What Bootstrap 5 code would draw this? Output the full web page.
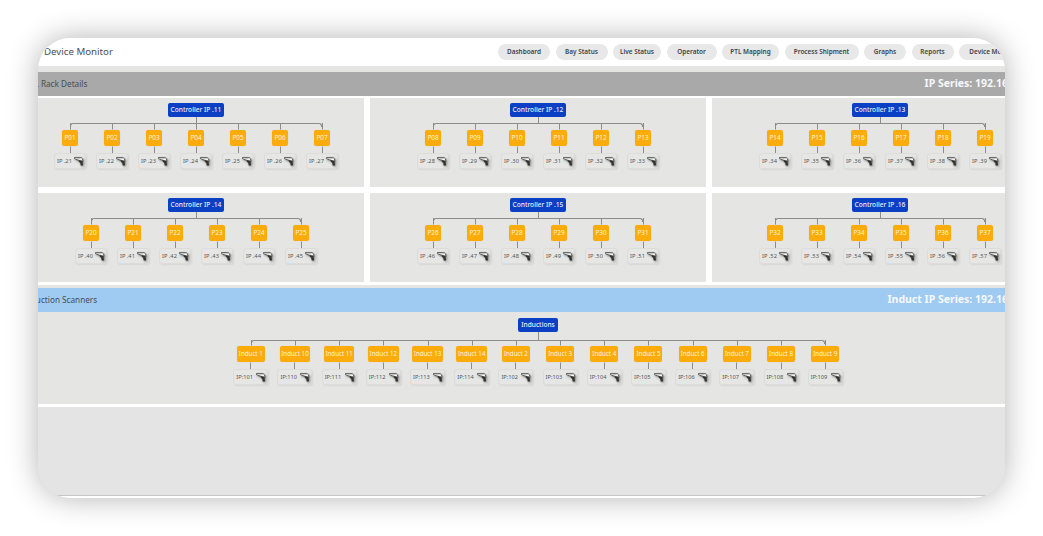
<!DOCTYPE html>
<html lang="en">
<head>
<meta charset="UTF-8" />
<meta name="viewport" content="width=device-width, initial-scale=1" />
<title>Device Monitor</title>
<link href="https://cdn.jsdelivr.net/npm/bootstrap@5.3.3/dist/css/bootstrap.min.css" rel="stylesheet" />
<style>
  html, body { height: 100%; background: #fff; overflow: hidden; }
  body { padding: 38px; font-family: "Noto Sans", "Open Sans", sans-serif; }
  .app-window { height: 460px; border-radius: 32px; overflow: hidden; background: #e5e5e4; box-shadow: 0 0 30px rgba(0,0,0,.3); }
  .app-head { height: 28px; background: #fff; padding-left: 6px; white-space: nowrap; margin-bottom: 6px; }
  .app-title { font-size: 9.7px; color: #4a5056; width: 454px; flex: none; }
  .menu-list { gap: 5.5px; }
  .menu-pill { font-size: 6.4px; font-weight: 600; color: #3c434a; background: #e8e8e8; height: 16px; line-height: 16px; border-radius: 8px; text-align: center; flex: none; }
  .sec-bar { height: 24px; overflow: hidden; }
  .sec-grey { background: #a9a9a9; }
  .sec-blue { background: #9fcbf3; }
  .sec-name { font-size: 8.2px; color: #474d54; white-space: nowrap; flex: none; }
  .rack-name { margin-left: -13px; }
  .induct-name { margin-left: -15px; }
  .sec-ip { font-size: 10.5px; font-weight: 700; color: #f6f8fa; white-space: nowrap; margin-right: -3px; }
  .rack-area { background: #fff; overflow: hidden; }
  .rack-grid { display: grid; grid-template-columns: repeat(3, 336px); gap: 6px; margin-left: -10px; padding-top: 2px; width: 1060px; }
  .rack-panel { height: 89px; background: #e5e5e3; padding-top: 5px; }
  .ctrl-tag { font-size: 6.6px; font-weight: 500; color: #e8eefc; background: #0b3fc4; height: 14px; line-height: 14px; padding: 0 3px; border-radius: 2px; white-space: nowrap; }
  .ctrl-stem { width: 1px; height: 6px; background: #8c8c8c; margin: 0 auto; }
  .tree-row { display: flex; justify-content: center; }
  .tree-item { width: 42px; position: relative; display: flex; flex-direction: column; align-items: center; padding-top: 7px; }
  .induct-row .tree-item { width: 44.2px; padding-top: 6px; }
  .tree-item::before { content: ""; position: absolute; top: 0; left: 0; right: 0; height: 0; border-top: 1px solid #8c8c8c; }
  .tree-item::after { content: ""; position: absolute; top: 0; left: 50%; width: 1px; height: 7px; background: #8c8c8c; }
  .tree-item:first-child::before { left: 50%; border-left: 1px solid #8c8c8c; border-top-left-radius: 3px; height: 4px; }
  .tree-item:last-child::before { right: 50%; border-right: 1px solid #8c8c8c; border-top-right-radius: 3px; height: 4px; }
  .port-tag { position: relative; z-index: 1; width: 16px; height: 16px; line-height: 16px; background: #fbac0a; color: #fdf3dc; font-size: 6.4px; text-align: center; border-radius: 2px; box-shadow: 0 0 0 .5px #ddd; }
  .induct-row .port-tag { width: auto; min-width: 28px; padding: 0 1.5px; font-size: 6.2px; white-space: nowrap; }
  .port-link { width: 1px; height: 7px; background: #8c8c8c; }
  .scan-chip { width: 32px; height: 16px; flex: none; border: 1px solid #dcdcdc; border-radius: 3px; background: #e6e6e5; display: flex; align-items: center; justify-content: space-between; padding: 0 1px 0 2px; font-size: 5.7px; color: #50565c; white-space: nowrap; box-shadow: 1px 1px 2px rgba(0,0,0,.07); }
  .induct-row .scan-chip { width: 35px; }
  .scan-icon { width: 10px; height: 11px; flex: none; filter: drop-shadow(1px 1px 1px rgba(0,0,0,.5)); }
  .blue-gap { height: 6px; background: #fff; border-bottom: 3px solid #e5e5e4; }
  .induct-panel { width: 1000px; height: 91px; padding-top: 5px; margin-top: 1px; }
  .induct-panel .ctrl-stem { height: 8px; }
  .rule-white { height: 3px; background: #fff; }
  .tail { height: 89px; background: #e4e4e4; border-bottom: 1px solid #c6c6c6; }
  .tail-end { height: 10px; background: #fff; }
</style>
</head>
<body>
<svg width="0" height="0" class="d-block">
  <symbol id="gun" viewBox="0 0 12 12">
    <path d="M.6 1.2 8.6 1.4 10.4 3 10.6 6 8.4 6.6 7.6 5 3.6 3.8.6 2.6Z" fill="#f4f4f4" stroke="#3a3a3a" stroke-width=".9"/>
    <path d="M5.4 4.4 9.8 4.8 11 10.6 8.2 11.2 7.4 7.4 5.8 6.2Z" fill="#333"/>
    <path d="M1 2 7.6 2.2" stroke="#888" stroke-width=".5"/>
  </symbol>
</svg>
<div class="app-window">
  <div class="app-head d-flex align-items-center">
    <div class="app-title">Device Monitor</div>
    <div class="menu-list d-flex" id="menu"></div>
  </div>
  <div class="sec-bar sec-grey d-flex align-items-center justify-content-between">
    <span class="sec-name rack-name">PTL Rack Details</span>
    <span class="sec-ip">IP Series: 192.16</span>
  </div>
  <div class="rack-area"><div class="rack-grid" id="racks"></div></div>
  <div class="blue-gap"></div>
  <div class="sec-bar sec-blue d-flex align-items-center justify-content-between">
    <span class="sec-name induct-name">Induction Scanners</span>
    <span class="sec-ip">Induct IP Series: 192.16</span>
  </div>
  <div class="induct-panel">
    <div class="d-flex justify-content-center"><span class="ctrl-tag">Inductions</span></div>
    <div class="ctrl-stem"></div>
    <div class="tree-row induct-row" id="inducts"></div>
  </div>
  <div class="rule-white"></div>
  <div class="tail"></div>
  <div class="tail-end"></div>
</div>
<script src="https://cdn.jsdelivr.net/npm/bootstrap@5.3.3/dist/js/bootstrap.bundle.min.js"></script>
<script>
  const menu = [['Dashboard',52],['Bay Status',52],['Live Status',48],['Operator',50],['PTL Mapping',57],['Process Shipment',74],['Graphs',42],['Reports',42],['Device Monitor',68]];
  document.getElementById('menu').innerHTML = menu.map(([t, w]) => `<span class="menu-pill" style="width:${w}px">${t}</span>`).join('');

  const chip = ip => `<div class="scan-chip"><span>${ip}</span><svg class="scan-icon"><use href="#gun"/></svg></div>`;
  const item = (tag, ip) => `<div class="tree-item"><div class="port-tag">${tag}</div><div class="port-link"></div>${chip(ip)}</div>`;

  const racks = [
    [11, 1, 21, 7], [12, 8, 28, 6], [13, 14, 34, 6],
    [14, 20, 40, 6], [15, 26, 46, 6], [16, 32, 52, 6]
  ];
  document.getElementById('racks').innerHTML = racks.map(([c, p, ip, n]) => {
    let row = '';
    for (let i = 0; i < n; i++) row += item('P' + String(p + i).padStart(2, '0'), 'IP .' + (ip + i));
    return `<div class="rack-panel"><div class="d-flex justify-content-center"><span class="ctrl-tag">Controller IP .${c}</span></div><div class="ctrl-stem"></div><div class="tree-row">${row}</div></div>`;
  }).join('');

  const inducts = [[1,101],[10,110],[11,111],[12,112],[13,113],[14,114],[2,102],[3,103],[4,104],[5,105],[6,106],[7,107],[8,108],[9,109]];
  document.getElementById('inducts').innerHTML = inducts.map(([n, ip]) => item('Induct ' + n, 'IP:' + ip)).join('');
</script>
</body>
</html>
